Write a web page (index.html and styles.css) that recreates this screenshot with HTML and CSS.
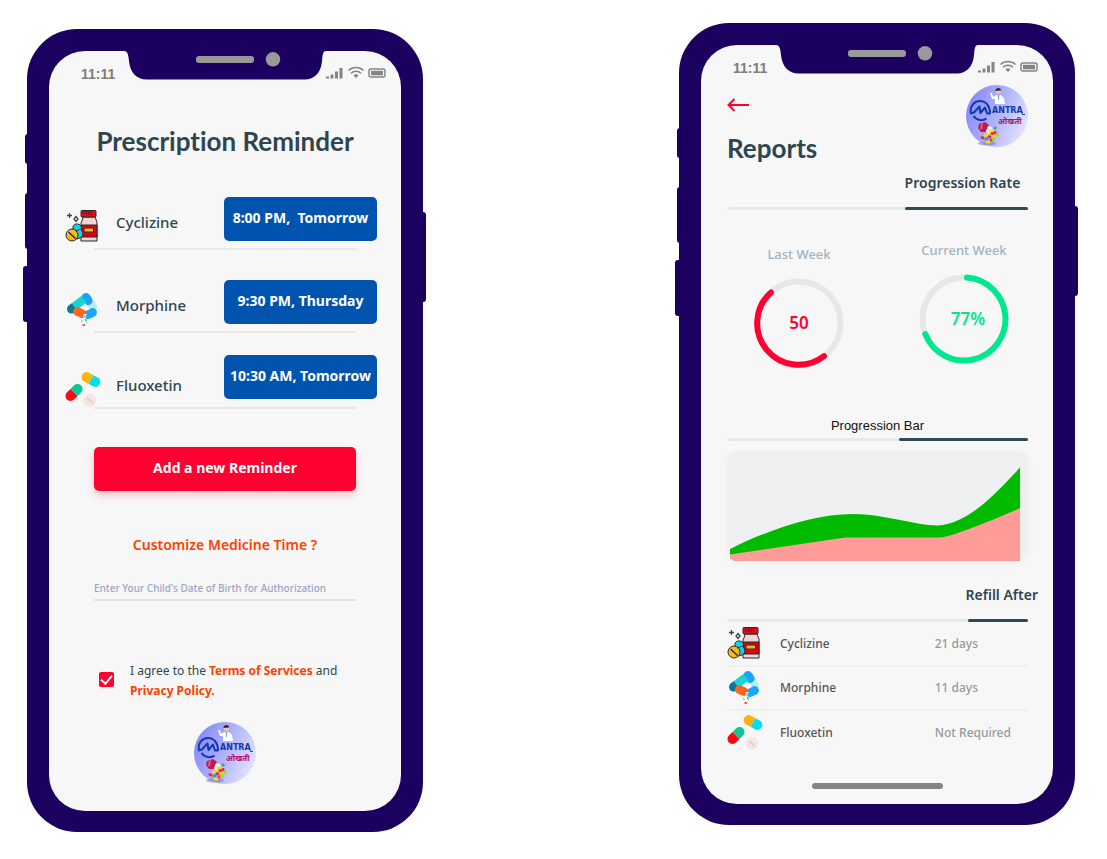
FILE: index.html
```
<!DOCTYPE html>
<html lang="en">
<head>
<meta charset="utf-8">
<title>Mantra – reminders and reports</title>
<link rel="stylesheet" href="styles.css">
</head>
<body>
<svg class="sprite" aria-hidden="true">
  <defs>
    <linearGradient id="logo-bg" x1="0" y1=".3" x2="1" y2=".7">
      <stop offset="0" stop-color="#8688f6"/>
      <stop offset=".5" stop-color="#b0b2fb"/>
      <stop offset="1" stop-color="#e6e7ff"/>
    </linearGradient>
  </defs>
  <symbol id="notch" viewBox="0 0 202 29">
    <path fill="#1c005f" d="M0 0H202C198.500 0 198.500 5 198 10C197 22 190 28.500 181 28.500H23C12 28.500 6 21 5 10C4.500 4 3.500 0 0 0Z"/>
    <rect x="72" y="5" width="58" height="7" rx="3" fill="#999"/>
    <circle cx="149" cy="8.300" r="7.200" fill="#999"/>
  </symbol>
  <symbol id="signals" viewBox="0 0 60 14">
    <g fill="#858585">
      <rect x="0" y="10.500" width="3" height="2"/><rect x="4.500" y="8.500" width="3" height="4"/>
      <rect x="9" y="5.500" width="3" height="7"/><rect x="13.500" y="2" width="3" height="10.500"/>
      <path d="M27.500 9.500 30 12l2.500-2.500a3.600 3.600 0 0 0-5 0Z"/>
      <rect x="45" y="4.800" width="12" height="4.500"/>
    </g>
    <g fill="none" stroke="#858585" stroke-width="1.500">
      <path d="M22.500 4.500a10.600 10.600 0 0 1 15 0M25 7.300a7 7 0 0 1 10 0"/>
      <rect x="43" y="3" width="16" height="8" rx="2"/>
    </g>
  </symbol>
  <symbol id="logo" viewBox="0 0 62 62">
    <circle cx="31" cy="31" r="31" fill="url(#logo-bg)"/>
    <path fill="#fff" d="M24 8l2 0 1 4 3-2h5l3 3 1 6-2 0v0H29l0-5-3 0Z"/>
    <path fill="#6fb2e8" d="M31.500 10h2l-.6 5h-.8Z"/>
    <circle cx="32.500" cy="6.500" r="2.500" fill="#f3c3a6"/>
    <path fill="#243044" d="M29.500 6c-.5-4 6-4 5.600-.5Z"/>
    <g fill="none" stroke="#1238ae" stroke-width="2" stroke-linejoin="round">
      <path d="M5 28C3.500 21 8.500 16 14 16C20 16 24 21 24 28.500"/>
      <path d="M4 28.500 8 27.500 13.500 21.500 14.500 28 19 22.500 21 28.500 24.500 28.500M7.500 31C11 36 17 36 20.500 33.500"/>
    </g>
    <path d="M55.500 27l1 2.500h2.500" fill="none" stroke="#1238ae" stroke-width="1"/>
    <ellipse cx="21" cy="58.500" rx="9" ry="2" fill="#7f7fb0" opacity=".6"/>
    <path fill="#c2184b" d="M13 39l6-2 4 3-3 7-5 0-3-4Z"/>
    <path fill="#f0607f" d="M15 39l2-1-1 6-2 0Z"/>
    <path fill="#f7f2ee" d="M22 41l4 1 2 5-6 2-2-3Z"/>
    <g stroke-linecap="round" stroke-width="3">
      <path stroke="#f0dc1c" d="M19 50.500l4-1M26 51.500l3-1M24 46.500l3-1M21 57h2"/>
      <path stroke="#f21e6b" d="M16 52.500l1 .5M23 51.800h1M26 48.500h.5M25 55h1M29 47.500l.2.500"/>
      <path stroke="#3a9ac8" d="M20 54l1.500-.5M29 43h.2"/>
      <path stroke="#a9cf1f" d="M27 54.500l1-.5M31 49.500l.5.500"/>
    </g>
  </symbol>
  <symbol id="cyclizine" viewBox="0 0 36 36">
    <g stroke="#222b33" stroke-width="1" stroke-linejoin="round">
      <path fill="#ecd7d2" d="M18 8h12l2 5v19H16V14l1-2Z"/>
      <rect x="16" y="1.500" width="15" height="6.500" rx="1" fill="#e00c18"/>
      <rect x="16" y="16" width="16" height="12" fill="#e4000f"/>
      <rect x="19" y="19" width="9.500" height="4" fill="#ffb30f"/>
      <path fill="#19cdeb" d="M8 18c0-3 5-4 7-2s2 4 1 5c3 2 2 7-1 8s-5 2-6-1Z"/>
      <circle cx="7" cy="26" r="6" fill="#fdb815"/>
    </g>
    <path d="M19 2v4M21.500 2v4M24 2v4M26.500 2v4" stroke="#8b0010" stroke-width="1"/>
    <path d="M3.500 23l7 6.500" stroke="#222b33" stroke-width="1.400"/>
    <path d="M10 22l6-2" stroke="#222b33" stroke-width=".8"/>
    <g fill="none" stroke="#3d454c" stroke-width="1.300">
      <path d="M4.500 4v5M2 6.500h5M11 7.500l2 2.500-2 2.500-2-2.500Z"/>
    </g>
  </symbol>
  <symbol id="morphine" viewBox="0 0 36 36">
    <g stroke-width="9" stroke-linecap="round">
      <path stroke="#b8eef2" d="M25 11 27.500 15"/>
      <path stroke="#0b7899" d="M6.500 17 9 15.200"/>
      <path stroke="#19a3ff" d="M21 5.500 23 8.500"/>
      <path stroke="#16d5d0" stroke-linecap="butt" d="M9.500 14.800 19 7.500"/>
      <path stroke="#17a8fb" d="M23 22.500 27.500 20.500"/>
      <path stroke="#ff641c" d="M12.500 19.500 17 21.500"/>
    </g>
    <path fill="#f7f7f7" d="M15 15.500l5-4 5 5.500-4 2Z"/>
    <path fill="#f7f7f7" d="M18.500 22h3l-1 6h-2Z"/>
    <path stroke="#52d3e7" stroke-width="1.500" d="M20 23v3M16 29h1.600M21 30h1"/>
    <path stroke="#ff5b32" stroke-width="2" d="M17.500 33h2.500"/>
    <path stroke="#237eb0" stroke-width="1.500" d="M20 28h1.500"/>
  </symbol>
  <symbol id="fluoxetin" viewBox="0 0 36 36">
    <g transform="rotate(29 26 7.500)">
      <path fill="#ffb20a" d="M26 2.500h-5a5 5 0 0 0 0 10h5Z"/>
      <path fill="#08ddef" d="M26 2.500h5a5 5 0 0 1 0 10h-5Z"/>
    </g>
    <g transform="rotate(-45 9 20.500)">
      <path fill="#fb0910" d="M9 15.500H4a5 5 0 0 0 0 10h5Z"/>
      <path fill="#0cc890" d="M9 15.500h5a5 5 0 0 1 0 10H9Z"/>
    </g>
    <circle cx="25" cy="28.500" r="6.500" fill="#f4e6e3"/>
    <path d="M22 26l6 5.500" stroke="#dcc9c7" stroke-width="1.600"/>
  </symbol>
</svg>

<main class="showcase">
  <section class="phone phone--reminder">
    <i class="key key--mute"></i><i class="key key--up"></i><i class="key key--down"></i><i class="key key--power"></i>
    <div class="screen">
      <div class="status">
        <span class="status__time">11:11</span>
        <svg class="status__notch" aria-hidden="true"><use href="#notch"/></svg>
        <svg class="status__icons" aria-hidden="true"><use href="#signals"/></svg>
      </div>
      <h1 class="title title--reminder">Prescription Reminder</h1>
      <ul class="doses">
        <li class="dose">
          <div class="dose__main">
            <svg class="pill" aria-hidden="true"><use href="#cyclizine"/></svg>
            <span class="dose__name">Cyclizine</span>
            <button class="dose__time" type="button">8:00 PM,&nbsp; Tomorrow</button>
          </div>
        </li>
        <li class="dose">
          <div class="dose__main">
            <svg class="pill" aria-hidden="true"><use href="#morphine"/></svg>
            <span class="dose__name">Morphine</span>
            <button class="dose__time" type="button">9:30 PM, Thursday</button>
          </div>
        </li>
        <li class="dose dose--low">
          <div class="dose__main">
            <svg class="pill" aria-hidden="true"><use href="#fluoxetin"/></svg>
            <span class="dose__name">Fluoxetin</span>
            <button class="dose__time" type="button">10:30 AM, Tomorrow</button>
          </div>
        </li>
      </ul>
      <form class="form">
        <button class="add" type="button">Add a new Reminder</button>
        <a class="customize" href="#time">Customize Medicine Time ?</a>
        <input class="birth" type="text" aria-label="Date of birth" placeholder="Enter Your Child's Date of Birth for Authorization">
        <div class="agree">
          <input class="agree__box" id="agree" type="checkbox" checked>
          <label class="agree__text" for="agree">I agree to the <a href="#terms">Terms of Services</a> and <a href="#privacy">Privacy Policy.</a></label>
        </div>
      </form>
      <svg class="logo logo--footer" viewBox="0 0 62 62" role="img" aria-label="Mantra">
        <use href="#logo"/>
        <text x="26" y="28" class="logo-latin">ANTRA</text>
        <text x="32" y="39" class="logo-hindi">ओखती</text>
      </svg>
    </div>
  </section>

  <section class="phone phone--reports">
    <i class="key key--mute"></i><i class="key key--up"></i><i class="key key--down"></i><i class="key key--power"></i>
    <div class="screen">
      <div class="status">
        <span class="status__time">11:11</span>
        <svg class="status__notch" aria-hidden="true"><use href="#notch"/></svg>
        <svg class="status__icons" aria-hidden="true"><use href="#signals"/></svg>
      </div>
      <div class="reports">
        <header class="reports__head">
          <div>
            <a class="back" href="#back" aria-label="Back">
              <svg viewBox="0 0 22 14" aria-hidden="true"><path d="M22 7H1.500M7.500 1 1.500 7l6 6" fill="none" stroke="#ff0030" stroke-width="2"/></svg>
            </a>
            <h1 class="title">Reports</h1>
          </div>
          <svg class="logo" viewBox="0 0 62 62" role="img" aria-label="Mantra">
            <use href="#logo"/>
            <text x="26" y="28" class="logo-latin">ANTRA</text>
            <text x="32" y="39" class="logo-hindi">ओखती</text>
          </svg>
        </header>

        <h2 class="heading heading--rate">Progression Rate</h2>
        <div class="rule"><span class="rule__on rule__on--rate"></span></div>

        <div class="weeks">
          <figure class="week week--last">
            <figcaption>Last Week</figcaption>
            <svg viewBox="0 0 90 90">
              <circle cx="45" cy="45" r="41.500" class="ring"/>
              <path class="ring ring--red" d="M17 14.400A41.500 41.500 0 0 0 70 78.200"/>
              <text x="45" y="51" fill="#ff0030">50</text>
            </svg>
          </figure>
          <figure class="week">
            <figcaption>Current Week</figcaption>
            <svg viewBox="0 0 90 90">
              <circle cx="45" cy="45" r="41.500" class="ring"/>
              <path class="ring ring--green" d="M48 3.600A41.500 41.500 0 1 1 6.300 60"/>
              <text x="49" y="51" fill="#00e88d">77%</text>
            </svg>
          </figure>
        </div>

        <h2 class="heading heading--bar">Progression Bar</h2>
        <div class="rule"><span class="rule__on rule__on--bar"></span></div>
        <svg class="chart" viewBox="0 0 303 110" preserveAspectRatio="none" role="img" aria-label="Progression chart">
          <path fill="#00bb00" d="M3 98C40 80 85 63 127 63C158 63 190 74.500 212 74.500C245 73 275 37 295 16.500V110H3Z"/>
          <path fill="#ff9c97" d="M3 103.500 119 86.500H208C216 86.500 220 86 228 83.500C252 75 272 67 295 57V110H3Z"/>
        </svg>

        <h2 class="heading heading--refill">Refill After</h2>
        <div class="rule"><span class="rule__on rule__on--refill"></span></div>
        <table class="refills">
          <tr><td class="refills__icon"><svg class="pill" aria-hidden="true"><use href="#cyclizine"/></svg></td><th scope="row">Cyclizine</th><td>21 days</td></tr>
          <tr><td class="refills__icon"><svg class="pill" aria-hidden="true"><use href="#morphine"/></svg></td><th scope="row">Morphine</th><td>11 days</td></tr>
          <tr><td class="refills__icon"><svg class="pill" aria-hidden="true"><use href="#fluoxetin"/></svg></td><th scope="row">Fluoxetin</th><td>Not Required</td></tr>
        </table>
      </div>
      <div class="home"></div>
    </div>
  </section>
</main>
</body>
</html>
```
FILE: styles.css
```
* { box-sizing: border-box; }

body {
  margin: 0;
  background: #fff;
  color: #2f4550;
  font-family: "Noto Sans", sans-serif;
  font-variant-ligatures: none;
}

h1, h2, ul, figure { margin: 0; padding: 0; }
svg { display: block; }
.sprite { position: absolute; width: 0; height: 0; }

.showcase {
  display: grid;
  grid-template-columns: 1fr 1fr;
  column-gap: 256px;
  align-items: start;
  padding: 23px 32px 0 27px;
}

/* Device frame */
.phone {
  position: relative;
  padding: 22px 22px 21px;
  border-radius: 50px;
  background: #1c005f;
}
.phone--reminder { margin-top: 6px; }

.key {
  position: absolute;
  width: 8px;
  border-radius: 3px;
  background: #1c005f;
}
.key--mute { left: -2px; top: 105px; height: 30px; }
.key--up { left: -2px; top: 164px; height: 56px; }
.key--down { left: -4px; top: 237px; height: 56px; }
.key--power { right: -3px; top: 183px; height: 90px; }

.screen {
  display: flex;
  flex-direction: column;
  border-radius: 36px;
  background: #f7f7f7;
}

.status {
  display: grid;
  grid-template-columns: 1fr 202px 1fr;
  height: 30px;
}
.status__time {
  padding: 15px 0 0 32px;
  color: #7d7d7d;
  font: bold 14px/16px "Liberation Sans", sans-serif;
}
.status__notch { width: 202px; height: 29px; }
.status__icons { width: 60px; height: 14px; margin-top: 15px; }

.title {
  font-family: Lato, sans-serif;
  font-size: 26px;
  font-weight: 700;
  line-height: 32px;
}
.title--reminder { margin-top: 44px; text-align: center; }

.pill { flex: none; width: 36px; height: 36px; }

/* Reminder list */
.doses {
  margin-top: 40px;
  padding: 0 24px 0 16px;
  list-style: none;
}
.dose::after {
  content: "";
  display: block;
  height: 2px;
  margin: 0 21px 0 29px;
  background: #e8e8e8;
}
.dose + .dose { margin-top: 30px; }
.dose + .dose--low { margin-top: 22px; }
.dose__main {
  display: flex;
  align-items: flex-start;
  height: 51px;
}
.dose__main .pill { margin-top: 12px; }
.dose__name {
  flex: 1;
  margin: 15px 0 0 15px;
  font-size: 15px;
  font-weight: 500;
  line-height: 20px;
}
.dose--low .dose__main { height: 52px; }
.dose--low .pill { margin-top: 17px; }
.dose--low .dose__name { margin-top: 20px; }
.dose__time, .add {
  height: 44px;
  padding: 0 0 2px;
  border: 0;
  border-radius: 5px;
  color: #fff;
  font: 700 14px/20px "Noto Sans", sans-serif;
  white-space: nowrap;
}
.dose__time { width: 153px; background: #0054b0; }

/* Reminder form */
.form {
  display: flex;
  flex-direction: column;
  padding: 38px 45px 0;
}
.add {
  background: #ff0030;
  box-shadow: 0 4px 8px rgba(255, 0, 48, .22);
}
.customize {
  margin-top: 44px;
  color: #ff4000;
  font-size: 14px;
  font-weight: 600;
  line-height: 20px;
  text-align: center;
  text-decoration: none;
}
.birth {
  height: 23px;
  margin-top: 23px;
  padding: 0 0 2px;
  border: 0;
  border-bottom: 2px solid #e3e3e3;
  background: none;
  font: 500 10px/14px "Noto Sans", sans-serif;
}
.birth::placeholder { color: #9da5c6; opacity: 1; }
.agree {
  display: flex;
  align-items: flex-start;
  gap: 16px;
  margin-top: 60px;
  padding-left: 5px;
}
.agree__box {
  flex: none;
  appearance: none;
  display: grid;
  place-items: center;
  width: 15px;
  height: 15px;
  margin: 11px 0 0;
  border-radius: 2px;
  background: #ff0030;
}
.agree__box:checked::after {
  content: "";
  width: 5px;
  height: 9px;
  margin-bottom: 2px;
  border: solid #fff;
  border-width: 0 2px 2px 0;
  transform: rotate(40deg);
}
.agree__text {
  font-size: 12px;
  line-height: 20px;
}
.agree__text a { color: #ff4000; font-weight: 700; text-decoration: none; }

.logo { width: 62px; height: 62px; }
.logo--footer { align-self: center; margin: 21px 0 27px; }
.logo-latin {
  fill: #1238ae;
  font: bold 8px "DejaVu Sans", sans-serif;
}
.logo-hindi {
  fill: #b01370;
  font: bold 8px "Noto Sans", sans-serif;
}

/* Reports */
.reports {
  display: flex;
  flex-direction: column;
  padding: 10px 25px 0 26px;
}
.reports__head {
  display: flex;
  justify-content: space-between;
  align-items: flex-start;
}
.back { display: block; margin: 13px 0 20px; }
.back svg { width: 22px; height: 14px; }

.heading {
  font-size: 14px;
  font-weight: 600;
  line-height: 20px;
  white-space: nowrap;
}
.heading--rate { width: 41%; margin: 9px 0 14px; align-self: flex-end; }
.heading--bar {
  margin: 48px 0 2px;
  color: #111;
  font: 400 13px/20px "Liberation Sans", sans-serif;
  text-align: center;
}
.heading--refill { margin: 24px -10px 14px; align-self: flex-end; }
.rule {
  display: flex;
  justify-content: flex-end;
  border-radius: 2px;
  background: #e6e9ec;
}
.rule__on { height: 3px; border-radius: 2px; background: #2f4a55; }
.rule__on--rate { width: 41%; }
.rule__on--bar { width: 43%; }
.rule__on--refill { width: 20%; }

.weeks {
  display: flex;
  justify-content: space-between;
  align-items: flex-start;
  margin-top: 30px;
  padding: 0 19px 0 27px;
}
.week {
  display: flex;
  flex-direction: column;
  align-items: center;
  gap: 14px;
  width: 90px;
}
.week--last { padding-top: 4px; }
.week figcaption {
  color: #a3b3bf;
  font-size: 13px;
  font-weight: 500;
  line-height: 20px;
  white-space: nowrap;
}
.week svg { width: 90px; height: 90px; }
.week text {
  font-size: 17px;
  font-weight: 600;
  text-anchor: middle;
}
.ring { fill: none; stroke: #e4e8eb; stroke-width: 6; stroke-linecap: round; }
.ring--red { stroke: #ff0030; }
.ring--green { stroke: #00e88d; }

.chart {
  width: 100%;
  height: 110px;
  margin-top: 10px;
  border-radius: 10px;
  background: #edeff1;
  box-shadow: 0 2px 12px rgba(0, 0, 0, .03);
}

.refills { width: 100%; border-collapse: collapse; }
.refills tr { height: 44px; }
.refills tr + tr { border-top: 2px solid #eff0f2; }
.refills td, .refills th {
  padding: 0;
  font-size: 12px;
  line-height: 20px;
  text-align: left;
}
.refills td { width: 31%; color: #9a9a9a; font-weight: 500; }
.refills th { padding-left: 17px; color: #555; font-weight: 500; }
.refills td.refills__icon { width: 36px; }

.home {
  align-self: center;
  width: 131px;
  height: 6px;
  margin: 29px 0 15px;
  border-radius: 3px;
  background: #858585;
}
```
